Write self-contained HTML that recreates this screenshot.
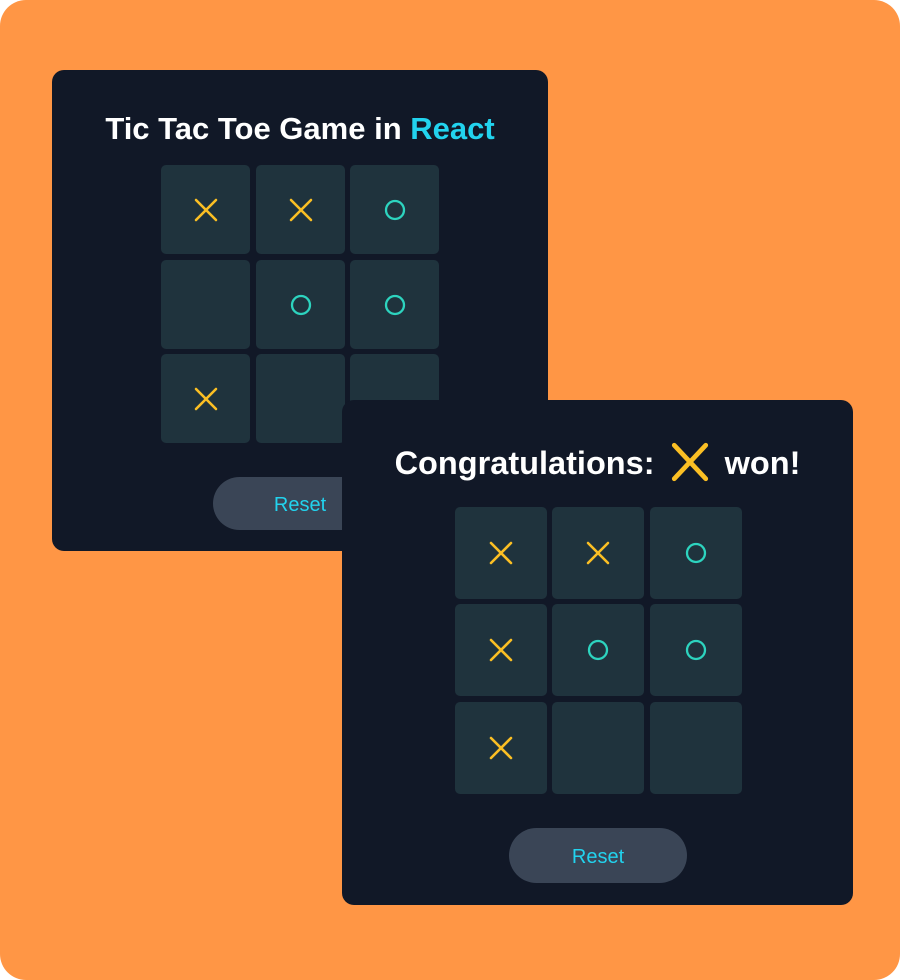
<!DOCTYPE html>
<html><head><meta charset="utf-8"><style>
*{margin:0;padding:0;box-sizing:border-box}
body{width:900px;height:980px;background:#fff;font-family:"Liberation Sans",sans-serif;overflow:hidden}
.bg{position:absolute;left:0;top:0;width:900px;height:980px;background:#ff9645;border-radius:26px}
.card{position:absolute;background:#111827;border-radius:12px}
.title{position:absolute;left:0;right:0;text-align:center;color:#fff;font-weight:bold;font-size:31px;white-space:nowrap}
.cell{position:absolute;background:#1f333d;border-radius:5px;display:flex;align-items:center;justify-content:center}
.btn{position:absolute;background:#3a4556;border-radius:28px;color:#22d3ee;font-size:20px;display:flex;align-items:center;justify-content:center;padding-top:3px}
</style></head><body>
<div class="bg"></div>
<div class="card" style="left:52px;top:70px;width:496px;height:481px">
<div class="title" style="top:41px">Tic Tac Toe Game in <span style="color:#22d3ee">React</span></div>
</div>
<div id="g1"></div>
<div class="btn" style="left:213px;top:477px;width:174px;height:53px">Reset</div>
<div class="card" style="left:342px;top:400px;width:511px;height:505px">
<div class="title" style="top:41px;font-size:32.5px">Congratulations: <svg width="42" height="42" viewBox="0 0 40 40" style="vertical-align:-9px;margin:0 5px"><path d="M5 4L35 36M35 4L5 36" stroke="#fbbf24" stroke-width="4.5" stroke-linecap="round"/></svg> won!</div>
</div>
<div class="btn" style="left:509px;top:828px;width:178px;height:55px">Reset</div>
<div id="g2"></div>
<script>
function X(){return '<svg width="24" height="24" viewBox="0 0 24 24"><path d="M2 2L22 22M22 2L2 22" stroke="#fbbf24" stroke-width="2.6" stroke-linecap="round"/></svg>'}
function O(){return '<svg width="24" height="24" viewBox="0 0 24 24"><circle cx="12" cy="12" r="9" fill="none" stroke="#2dd4bf" stroke-width="2.3"/></svg>'}
function grid(xs,ys,w,h,b){let s='';for(let r=0;r<3;r++)for(let c=0;c<3;c++){const v=b[r*3+c];s+='<div class="cell" style="left:'+xs[c]+'px;top:'+ys[r]+'px;width:'+w+'px;height:'+h+'px">'+(v=='X'?X():v=='O'?O():'')+'</div>'}return s}
document.getElementById('g1').outerHTML=grid([161,256,350],[165,260,354],89,89,['X','X','O','','O','O','X','','']);
document.getElementById('g2').outerHTML=grid([455,552,650],[507,604,702],92,92,['X','X','O','X','O','O','X','','']);
</script>
</body></html>
